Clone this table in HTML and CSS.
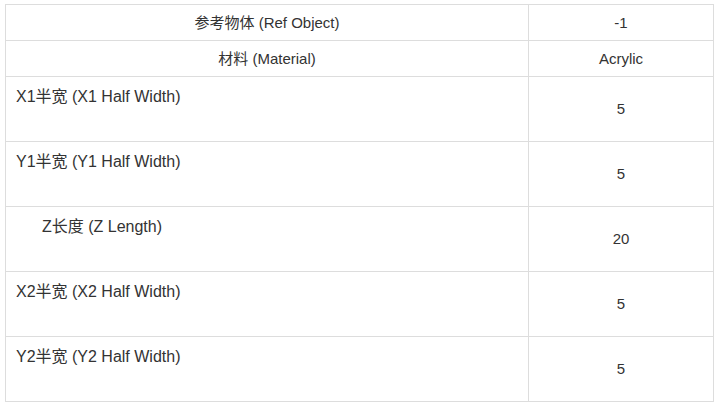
FILE: index.html
```html
<!DOCTYPE html>
<html lang="zh">
<head>
<meta charset="utf-8">
<title>参数表</title>
<link rel="stylesheet" href="styles.css">
</head>
<body>
<table class="params">
  <colgroup>
    <col class="col-label">
    <col class="col-value">
  </colgroup>
  <tbody>
    <tr class="row-short">
      <td class="label center">参考物体 (Ref Object)</td>
      <td class="value">-1</td>
    </tr>
    <tr class="row-short">
      <td class="label center">材料 (Material)</td>
      <td class="value">Acrylic</td>
    </tr>
    <tr class="row-tall">
      <td class="label">X1半宽 (X1 Half Width)</td>
      <td class="value">5</td>
    </tr>
    <tr class="row-tall">
      <td class="label">Y1半宽 (Y1 Half Width)</td>
      <td class="value">5</td>
    </tr>
    <tr class="row-tall">
      <td class="label indent">Z长度 (Z Length)</td>
      <td class="value">20</td>
    </tr>
    <tr class="row-tall">
      <td class="label">X2半宽 (X2 Half Width)</td>
      <td class="value">5</td>
    </tr>
    <tr class="row-tall">
      <td class="label">Y2半宽 (Y2 Half Width)</td>
      <td class="value">5</td>
    </tr>
  </tbody>
</table>
</body>
</html>
```
FILE: styles.css
```css
html, body {
  margin: 0;
  padding: 0;
  background: #ffffff;
}

body {
  padding: 4px 0 0 5px;
  font-family: "Liberation Sans", Arial, "Noto Sans CJK SC", sans-serif;
  font-size: 15px;
  line-height: 20px;
  color: #333333;
}

.params {
  border-collapse: collapse;
  table-layout: fixed;
  width: 708px;
}

.col-label { width: 523px; }
.col-value { width: 185px; }

.params td {
  border: 1px solid #dddddd;
  padding: 0 10px;
}

.row-short td {
  height: 35px;
  vertical-align: middle;
}

.row-tall td {
  height: 54px;
}

.label {
  text-align: left;
  vertical-align: top;
}

.row-tall .label {
  padding-top: 10px;
  padding-bottom: 0;
  font-size: 16px;
  vertical-align: top;
}

.label.center {
  text-align: center;
}

.label.indent {
  padding-left: 36px;
}

.value {
  text-align: center;
  vertical-align: middle;
}
```
